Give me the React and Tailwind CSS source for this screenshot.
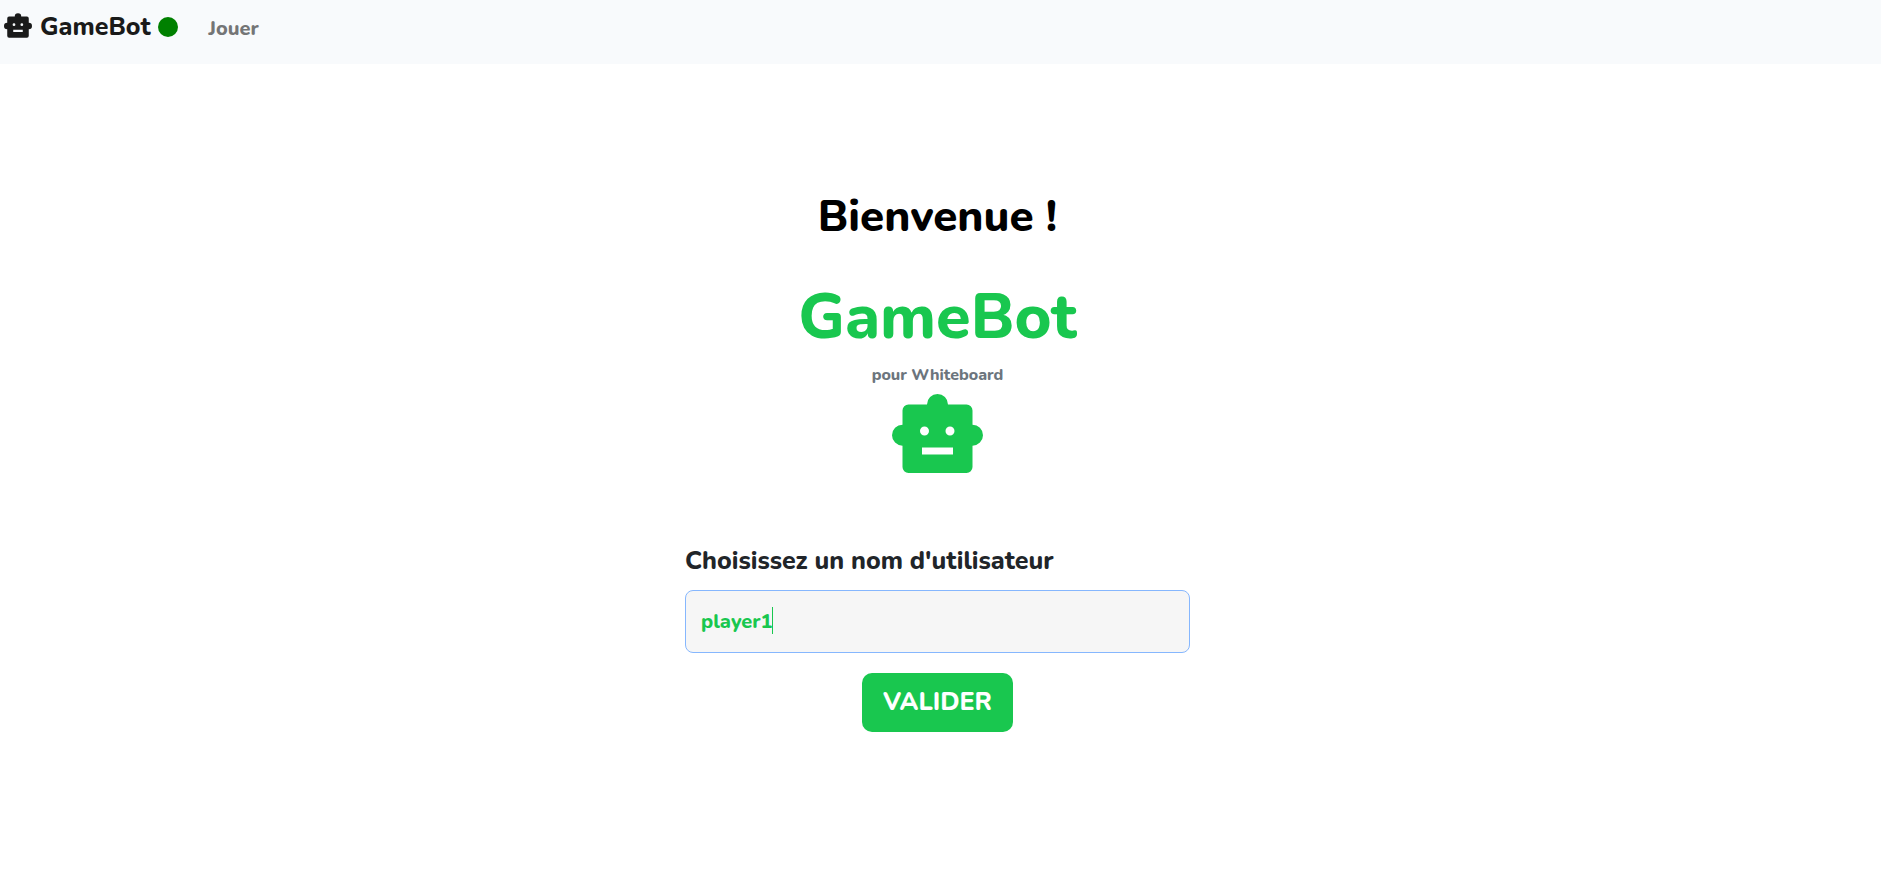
import React, { useState } from "react";

function RobotIcon({ className }) {
  return (
    <svg viewBox="0 0 91 79" className={className} fill="currentColor" aria-hidden="true">
      <path
        fillRule="evenodd"
        d="M16.5 10.5H35a10.5 10.5 0 0 1 21 0h18.500a6 6 0 0 1 6 6v14.200a10.500 10.500 0 0 1 0 21V73a6 6 0 0 1-6 6h-58a6 6 0 0 1-6-6V51.700a10.500 10.500 0 0 1 0-21V16.500a6 6 0 0 1 6-6ZM28 37a4.500 4.500 0 1 0 9 0a4.500 4.500 0 1 0-9 0ZM53.500 37a4.500 4.500 0 1 0 9 0a4.500 4.500 0 1 0-9 0ZM30 53.500v7h31v-7Z"
      />
    </svg>
  );
}

export default function App() {
  const [name, setName] = useState("player1");

  return (
    <div className="min-h-screen bg-white font-['Nunito','Open_Sans',sans-serif] font-extrabold text-[#212529]">
      <nav className="flex h-16 items-start bg-[#f8fafc] pl-1 pt-2">
        <a href="#" className="flex h-[38px] items-center text-[#1a1a1a]">
          <RobotIcon className="mb-1 h-[25px] w-7" />
          <span className="ml-2 text-[25px] leading-10">GameBot</span>
          <span className="ml-[7px] size-5 rounded-full bg-[#008000]" />
        </a>
        <a href="#" className="ml-[31px] flex h-[42px] items-center text-xl text-[#747576]">
          Jouer
        </a>
      </nav>

      <main className="flex flex-col items-center pr-[6px] pt-[121px]">
        <h1 className="text-[44px] leading-[64px] text-black">Bienvenue !</h1>
        <h2 className="mt-7 text-[63px] leading-[80px] text-[#19c74f]">GameBot</h2>
        <p className="mt-[6px] text-base leading-6 text-[#6c757d]">pour Whiteboard</p>
        <RobotIcon className="mt-[7px] h-[79px] w-[91px] text-[#19c74f]" />

        <form className="mt-[72px] flex w-[505px] max-w-full flex-col items-center" onSubmit={(e) => e.preventDefault()}>
          <label htmlFor="username" className="w-full text-[25px] leading-8">
            Choisissez un nom d'utilisateur
          </label>
          <div className="relative mt-[13px] w-full">
            <input
              id="username"
              type="text"
              value={name}
              onChange={(e) => setName(e.target.value)}
              className="block h-[63px] w-full rounded-lg border border-[#86b7fe] bg-[#f6f6f6] px-[15px] text-xl text-[#19c74f] outline-none"
            />
            <span className="absolute left-[87px] top-[17px] h-[27px] w-px bg-[#19c74f]" />
          </div>
          <button type="submit" className="mt-5 h-[59px] w-[151px] rounded-[10px] bg-[#19c74f] text-[25px] text-white">
            VALIDER
          </button>
        </form>
      </main>
    </div>
  );
}
